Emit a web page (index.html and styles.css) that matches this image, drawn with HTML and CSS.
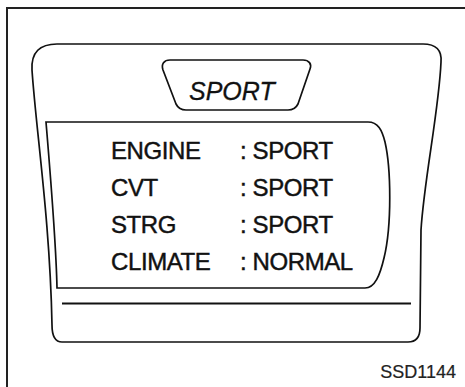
FILE: index.html
```html
<!DOCTYPE html>
<html lang="en">
<head>
    <meta charset="UTF-8">
    <meta name="viewport" content="width=device-width, initial-scale=1.0">
    <title>SSD1144</title>
    <link rel="stylesheet" href="styles.css">
</head>
<body>
    <div class="sheet">
        <svg class="drawing" width="457" height="378" viewBox="8 9 457 378">
            <!-- display housing -->
            <path class="line" d="M 57 44 L 423 44 C 436 44 442 50 441 62 C 439 110 424 180 421 230 L 420 328 C 420 337 416 342 408 342 L 62 342 C 55 342 52 336 52 325 C 50 220 36 130 32 70 C 31 52 40 44 57 44 Z"/>

            <!-- mode tab -->
            <path class="line" d="M 170 60 L 303 60 C 309 60 312 64 310 69 L 298 104 C 296 108 293 110 288 110 L 186 110 C 181 110 178 108 176 104 L 163 70 C 161 64 164 60 170 60 Z"/>
            <text class="tab-label" x="189" y="100">SPORT</text>

            <!-- settings panel -->
            <path class="line" d="M 46 122 L 368 122 C 378 122 382 130 385 142 C 391 168 392 225 384 258 C 380 275 375 288 365 288 L 57 288 C 56 240 50 170 46 122 Z"/>

            <g class="rows">
                <text x="111" y="159">ENGINE</text>
                <text x="240" y="159">: SPORT</text>
                <text x="111" y="196">CVT</text>
                <text x="240" y="196">: SPORT</text>
                <text x="111" y="233">STRG</text>
                <text x="240" y="233">: SPORT</text>
                <text x="111" y="270">CLIMATE</text>
                <text x="240" y="270">: NORMAL</text>
            </g>

            <line class="rule" x1="62" y1="303.5" x2="411" y2="303.5"/>

            <text class="code" x="456" y="378">SSD1144</text>
        </svg>
    </div>
</body>
</html>
```

FILE: styles.css
```css
body {
    margin: 0;
    background-color: #fff;
    font-family: "Liberation Sans", Arial, sans-serif;
    overflow: hidden;
}

.sheet {
    margin: 7px 0 0 6px;
    height: 380px;
    border-top: 2px solid #222;
    border-left: 2px solid #222;
}

.drawing {
    display: block;
}

.line {
    fill: none;
    stroke: #111;
    stroke-width: 1.7;
}

.rule {
    stroke: #111;
    stroke-width: 2;
}

.tab-label {
    font-size: 25px;
    font-style: italic;
    fill: #111;
    stroke: #111;
    stroke-width: 0.3;
}

.rows text {
    font-size: 24px;
    letter-spacing: -0.4px;
    fill: #111;
    stroke: #111;
    stroke-width: 0.45;
}

.code {
    font-size: 18px;
    text-anchor: end;
    fill: #222;
    stroke: #222;
    stroke-width: 0.2;
}
```
